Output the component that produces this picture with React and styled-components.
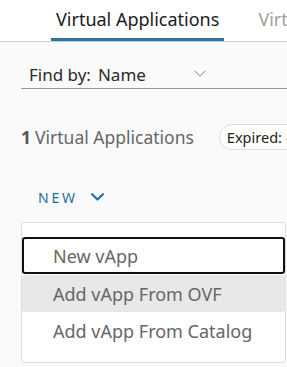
import React from 'react'
import styled, { createGlobalStyle } from 'styled-components'

const GlobalStyle = createGlobalStyle`
  html, body {
    margin: 0;
    padding: 0;
    background: #fafafa;
    font-family: "Noto Sans", Lato, sans-serif;
    overflow: hidden;
  }
`

const Page = styled.div`
  width: 287px;
  height: 367px;
  overflow: hidden;
`

const TabBar = styled.div`
  display: flex;
  align-items: stretch;
  gap: 29px;
  height: 41px;
  padding-left: 51px;
  background: #fff;
  border-bottom: 1px solid #cccccc;
  white-space: nowrap;
`

const Tab = styled.div`
  display: flex;
  align-items: center;
  padding: 0 5px 3px;
  font-size: 18px;
  color: ${p => (p.active ? '#1b1b1b' : '#a0a0a0')};
  box-shadow: ${p => (p.active ? 'inset 0 -3px 0 #2e75a6' : 'none')};
`

const Content = styled.div`
  padding-left: 21px;
`

const FindBy = styled.div`
  display: flex;
  align-items: center;
  height: 32px;
  margin-top: 15px;
  padding: 3px 0 0 8px;
  box-sizing: border-box;
  border-bottom: 1px solid #9b9b9b;
  font-size: 17px;
  color: #2a2a2a;
  white-space: nowrap;
`

const FindValue = styled.span`
  margin-left: 7px;
  width: 96px;
`

const CountRow = styled.div`
  display: flex;
  align-items: center;
  margin-top: 35px;
  height: 26px;
  white-space: nowrap;
  font-size: 17.5px;
  color: #666666;
`

const Count = styled.b`
  color: #575757;
  margin-right: 4px;
`

const Pill = styled.span`
  margin-left: 25px;
  display: inline-flex;
  align-items: center;
  height: 24px;
  padding: 0 10px 0 7px;
  border: 1px solid #dcdcdc;
  border-radius: 13px;
  background: #fff;
  font-size: 14.5px;
  color: #222;
`

const NewButton = styled.div`
  display: flex;
  align-items: center;
  gap: 13px;
  margin-top: 35px;
  padding-left: 17px;
  height: 24px;
  font-size: 14px;
  letter-spacing: 2.8px;
  color: #1f6fa3;
`

const Menu = styled.div`
  margin-top: 13px;
  width: 265px;
  height: 141px;
  padding-top: 14px;
  box-sizing: border-box;
  background: #fff;
  border: 1px solid #dedede;
  border-radius: 3px;
`

const Item = styled.div`
  height: 37px;
  display: flex;
  align-items: center;
  box-sizing: border-box;
  font-size: 18px;
  color: #666666;
  border-radius: 3px;
  background: ${p => (p.hover ? '#e8e8e8' : 'transparent')};
  border: ${p => (p.focus ? '2px solid #111' : 'none')};
  margin-bottom: ${p => (p.focus ? '1px' : '0')};
  padding-left: ${p => (p.focus ? '29px' : '31px')};
`

const Chevron = ({ size = 12, color = '#1f6fa3', stroke = 2 }) => (
  <svg width={size} height={size * 0.6} viewBox="0 0 12 7" fill="none">
    <path d="M1 1l5 5 5-5" stroke={color} strokeWidth={stroke} strokeLinecap="round" strokeLinejoin="round" />
  </svg>
)

export default function App() {
  return (
    <Page>
      <GlobalStyle />
      <TabBar>
        <Tab active>Virtual Applications</Tab>
        <Tab>Virtual Machines</Tab>
      </TabBar>
      <Content>
        <FindBy>
          Find by:
          <FindValue>Name</FindValue>
          <Chevron size={12} color="#a8a8a8" stroke={1.2} />
        </FindBy>
        <CountRow>
          <Count>1</Count>Virtual Applications
          <Pill>Expired: No</Pill>
        </CountRow>
        <NewButton>
          NEW
          <Chevron size={13} />
        </NewButton>
        <Menu>
          <Item focus>New vApp</Item>
          <Item hover>Add vApp From OVF</Item>
          <Item>Add vApp From Catalog</Item>
        </Menu>
      </Content>
    </Page>
  )
}
